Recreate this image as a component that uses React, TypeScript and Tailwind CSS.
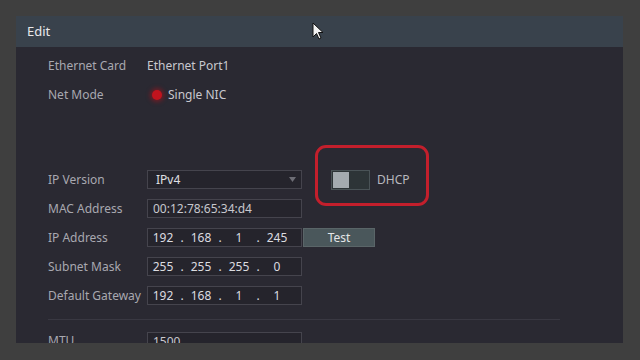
import React from 'react';

const font = { fontFamily: '"Noto Sans", "Open Sans", sans-serif' };

const Label: React.FC<{ children: React.ReactNode }> = ({ children }) => (
  <div className="w-[99px] shrink-0 text-[12px] text-[#a8a8b0] whitespace-nowrap">{children}</div>
);

const IpField: React.FC<{ parts: string[] }> = ({ parts }) => (
  <div className="flex h-[19px] w-[155px] items-center border border-[#45444d] bg-[#25242c] text-[12px] text-[#dcdce0]">
    {parts.map((p, i) => (
      <React.Fragment key={i}>
        <div className="w-[30px] text-center">{p}</div>
        {i < parts.length - 1 && <div className="w-[8px] text-center">.</div>}
      </React.Fragment>
    ))}
  </div>
);

const Row: React.FC<{ label: string; children: React.ReactNode }> = ({ label, children }) => (
  <div className="flex h-[29px] items-center">
    <Label>{label}</Label>
    {children}
  </div>
);

export default function App() {
  return (
    <div className="relative h-[360px] w-[640px] overflow-hidden bg-[#3f3f3f] pt-[16px] pl-[16px]" style={font}>
      <div className="w-[607px]">
        {/* Title bar */}
        <div className="flex h-[31px] items-center bg-[#39424c] pl-[11px] text-[13px] text-[#e8e8ea]">Edit</div>

        {/* Body */}
        <div className="relative h-[296px] overflow-hidden bg-[#2a2932] pl-[32px] pt-[4px]">
          <Row label="Ethernet Card">
            <div className="text-[12px] text-[#c8c8ce]">Ethernet Port1</div>
          </Row>
          <Row label="Net Mode">
            <div className="flex items-center gap-[6px] pl-[5px] text-[12px] text-[#c8c8ce]">
              <span className="h-[10px] w-[10px] rounded-full bg-[#c0141e] shadow-[0_0_4px_2px_rgba(160,20,30,0.6)]" />
              Single NIC
            </div>
          </Row>

          <div className="h-[56px]" />

          <Row label="IP Version">
            <div className="flex h-[19px] w-[155px] items-center justify-between border border-[#45444d] bg-[#25242c] pl-[8px] pr-[5px] text-[12px] text-[#e0e0e4]">
              <span>IPv4</span>
              <svg width="7" height="5" viewBox="0 0 7 5">
                <path d="M0 0h7L3.5 5z" fill="#6e6e76" />
              </svg>
            </div>
            <div className="ml-[29px] flex items-center gap-[7px]">
              <div className="flex h-[20px] w-[39px] border border-[#4a5357] bg-[#2d3437]">
                <div className="m-[1px] w-[16px] bg-[#a4abb0]" />
              </div>
              <span className="text-[12px] text-[#b8b8be]">DHCP</span>
            </div>
          </Row>
          <Row label="MAC Address">
            <div className="flex h-[19px] w-[155px] items-center border border-[#45444d] bg-[#25242c] pl-[5px] text-[12px] text-[#c8c8ce]">
              00:12:78:65:34:d4
            </div>
          </Row>
          <Row label="IP Address">
            <IpField parts={['192', '168', '1', '245']} />
            <button className="ml-[1px] h-[19px] w-[72px] border border-[#5a6568] bg-[#4a575b] text-[12px] text-[#e4e6e8]">
              Test
            </button>
          </Row>
          <Row label="Subnet Mask">
            <IpField parts={['255', '255', '255', '0']} />
          </Row>
          <Row label="Default Gateway">
            <IpField parts={['192', '168', '1', '1']} />
          </Row>

          <div className="mt-[9px] h-px w-[512px] bg-[#393842]" />

          <div className="mt-[12px] flex items-start">
            <Label>MTU</Label>
            <div className="flex h-[19px] w-[155px] items-center border border-[#45444d] bg-[#25242c] pl-[5px] text-[12px] text-[#c8c8ce]">
              1500
            </div>
          </div>

          {/* DHCP highlight annotation */}
          <div className="absolute left-[299px] top-[98px] h-[61px] w-[114px] rounded-[11px] border-[3px] border-[#c31f2c]" />
        </div>
      </div>

      {/* Mouse cursor */}
      <svg className="absolute left-[312px] top-[22px]" width="12" height="18" viewBox="0 0 12 18">
        <path d="M1 1v14l3.5-3.5 2.5 5.5 2-1-2.5-5.5H11z" fill="#f2f2f2" stroke="#111" strokeWidth="1" />
      </svg>
    </div>
  );
}
